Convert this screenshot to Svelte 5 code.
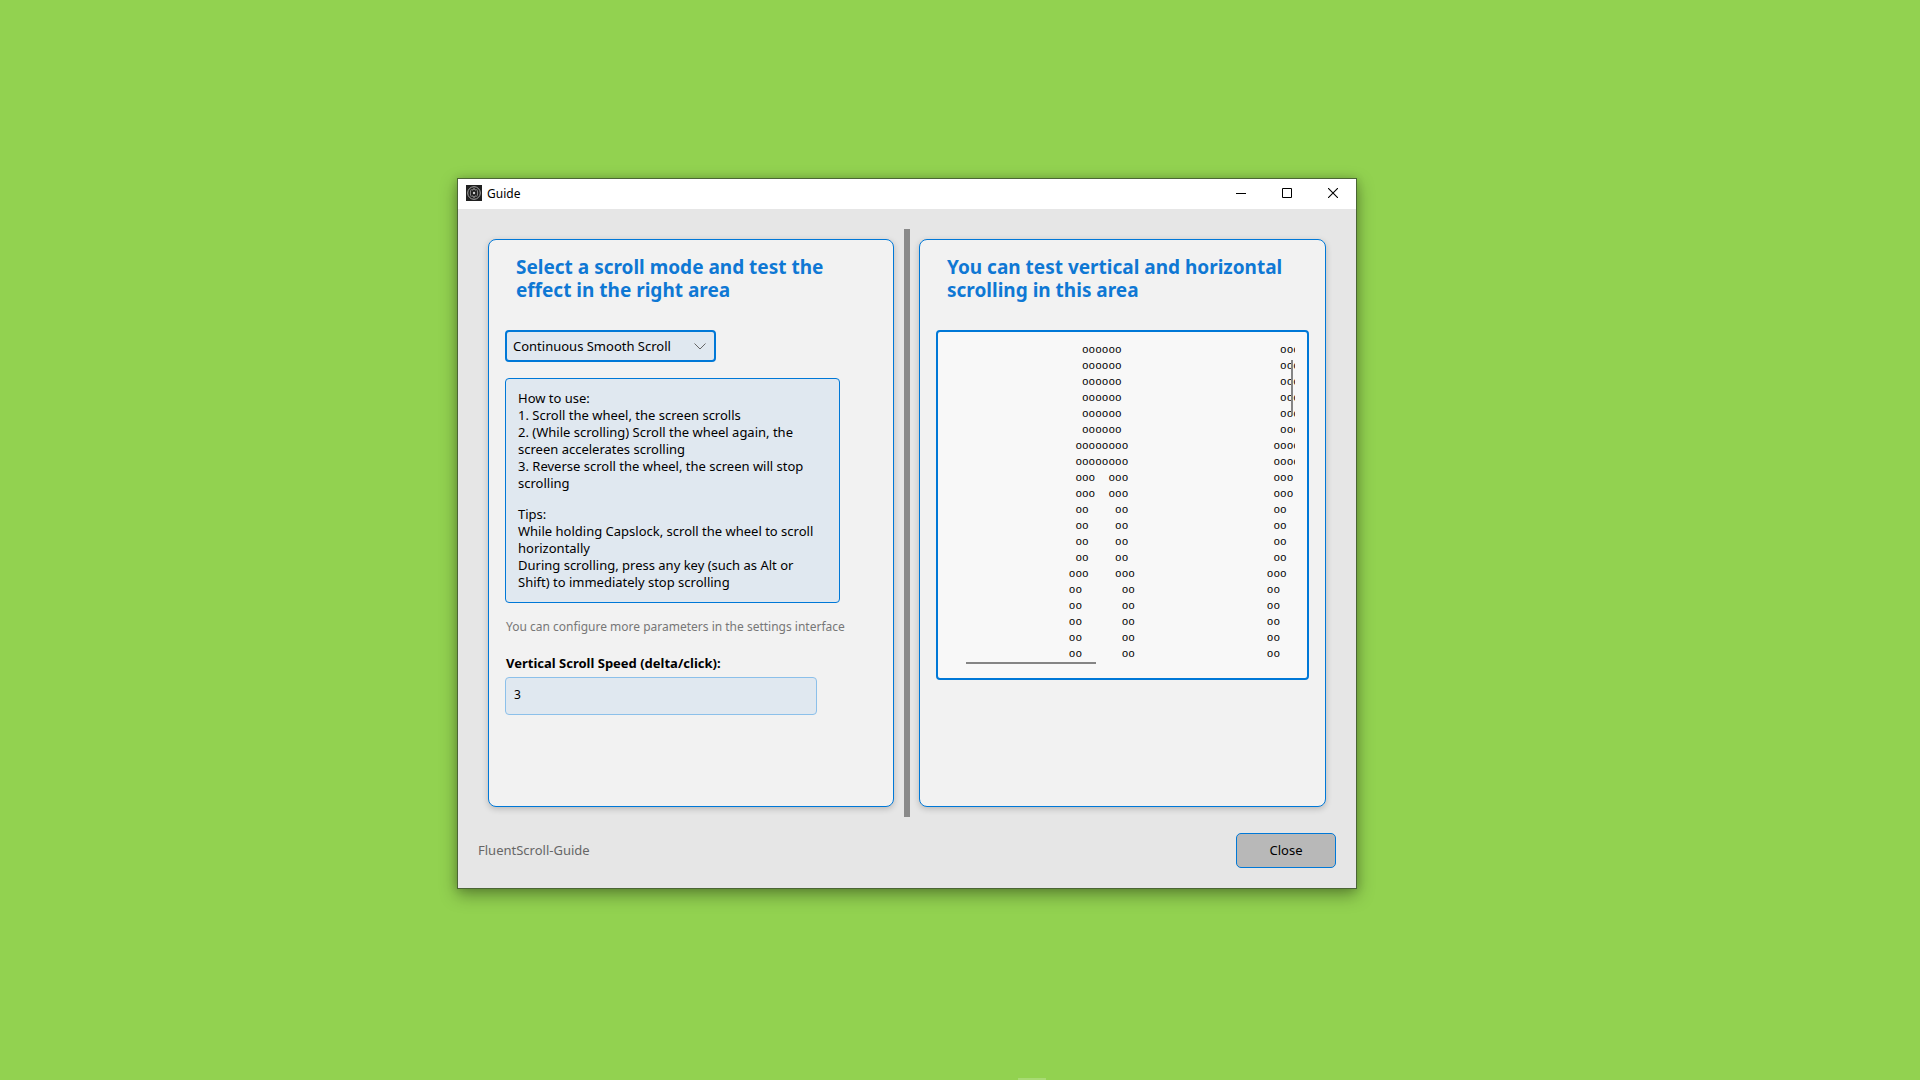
<script>
  const modes = ['Continuous Smooth Scroll', 'Single Smooth Scroll', 'Windows Default'];

  let mode = $state(modes[0]);
  let speed = $state('3');

  // the test pattern repeats every 30 characters
  const pattern = [
    ...Array(6).fill([[20, 6]]),
    ...Array(2).fill([[19, 8]]),
    ...Array(2).fill([[19, 3], [24, 3]]),
    ...Array(4).fill([[19, 2], [25, 2]]),
    [[18, 3], [25, 3]],
    ...Array(5).fill([[18, 2], [26, 2]]),
  ];

  function drawLine(runs) {
    let line = '';
    for (let i = 0; i < 3; i++) {
      for (const [start, count] of runs) {
        line = line.padEnd(start + i * 30) + 'o'.repeat(count);
      }
    }
    return line;
  }

  const testText = pattern.map(drawLine).join('\n');
</script>

<div class="desktop">
  <main class="window">
    <header class="titlebar">
      <svg class="app-icon" width="16" height="16" viewBox="0 0 16 16" fill="none">
        <rect width="16" height="16" fill="#202020" />
        <circle cx="8" cy="8" r="6.3" stroke="#a8a8a8" />
        <path d="M5.4 4.2C4 6 4 10 5.4 11.8M10.6 4.2C12 6 12 10 10.6 11.8" stroke="#8c8c8c" />
        <path d="M6.2 5.2 8 3.6l1.8 1.6M6.2 10.8 8 12.4l1.8-1.6" stroke="#c4c4c4" />
        <circle cx="8" cy="8" r="1.2" fill="#d0d0d0" />
      </svg>
      <span class="title">Guide</span>
      <div class="controls">
        <button class="control" aria-label="Minimize">
          <svg width="10" height="10" viewBox="0 0 10 10"><path d="M0 5.5h10" stroke="#000" /></svg>
        </button>
        <button class="control" aria-label="Maximize">
          <svg width="10" height="10" viewBox="0 0 10 10"><path d="M.5.5h9v9h-9z" fill="none" stroke="#000" /></svg>
        </button>
        <button class="control" aria-label="Close window">
          <svg width="10" height="10" viewBox="0 0 10 10"><path d="m0 0 10 10M10 0 0 10" stroke="#000" stroke-width="1.1" /></svg>
        </button>
      </div>
    </header>

    <div class="content">
      <section class="panel">
        <h2>Select a scroll mode and test the effect in the right area</h2>
        <div class="combo">
          <select aria-label="Scroll mode" bind:value={mode}>
            {#each modes as item}
              <option value={item}>{item}</option>
            {/each}
          </select>
          <svg class="chevron" width="12" height="7" viewBox="0 0 12 7"><path d="M.5.5 6 6 11.5.5" fill="none" stroke="#666" /></svg>
        </div>
        <div class="howto">
          <p>
            How to use:<br />
            1. Scroll the wheel, the screen scrolls<br />
            2. (While scrolling) Scroll the wheel again, the screen accelerates scrolling<br />
            3. Reverse scroll the wheel, the screen will stop scrolling
          </p>
          <p>
            Tips:<br />
            While holding Capslock, scroll the wheel to scroll horizontally<br />
            During scrolling, press any key (such as Alt or Shift) to immediately stop scrolling
          </p>
        </div>
        <p class="hint">You can configure more parameters in the settings interface</p>
        <label for="speed">Vertical Scroll Speed (delta/click):</label>
        <input id="speed" type="text" bind:value={speed} />
      </section>

      <div class="divider"></div>

      <section class="panel">
        <h2>You can test vertical and horizontal scrolling in this area</h2>
        <div class="tester">
          <pre>{testText}</pre>
          <div class="thumb-y"></div>
          <div class="thumb-x"></div>
        </div>
      </section>
    </div>

    <footer>
      <span class="name">FluentScroll-Guide</span>
      <button class="close">Close</button>
    </footer>
  </main>
  <div class="taskbar-edge"></div>
</div>

<style>
:global(body) {
  background: #92d250;
}
.desktop {
  position: relative;
  box-sizing: border-box;
  min-height: 100vh;
  font-family: "Noto Sans", "Open Sans", sans-serif;
  font-size: 13px;
  color: #000;
  overflow: hidden;
}
.window {
  position: absolute;
  top: 178px;
  left: 457px;
  box-sizing: border-box;
  width: 100%;
  max-width: 900px;
  border: 1px solid #4b6535;
  background: #e6e6e6;
  box-shadow: 0 6px 16px rgba(0, 0, 0, 0.35), 0 0 8px rgba(0, 0, 0, 0.15);
}
.titlebar {
  display: flex;
  align-items: center;
  box-sizing: border-box;
  height: 30px;
  padding: 0 0 2px 8px;
  background: #fff;
}
.title {
  margin-left: 5px;
  font-size: 12px;
}
.controls {
  display: flex;
  margin-left: auto;
}
.control {
  display: flex;
  align-items: center;
  justify-content: center;
  width: 46px;
  height: 28px;
  padding: 0;
  border: 0;
  background: transparent;
}
.content {
  display: grid;
  grid-template-columns: minmax(0, 406fr) 5px minmax(0, 407fr);
  gap: 10px;
  padding: 20px 30px 0;
}
.divider {
  width: 6px;
  background: #8a8a8a;
}
.panel {
  box-sizing: border-box;
  min-height: 568px;
  margin: 10px 0;
  padding: 16px;
  border: 1px solid #0078d7;
  border-radius: 8px;
  background: #f2f2f2;
  box-shadow: 0 2px 6px rgba(0, 0, 0, 0.2);
}
h2 {
  margin: 0 10px 28px 11px;
  font-size: 19px;
  font-weight: 700;
  line-height: 23px;
  color: #0f78d4;
}
.combo {
  position: relative;
  width: 211px;
}
select {
  appearance: none;
  box-sizing: border-box;
  width: 100%;
  height: 32px;
  padding: 0 6px;
  border: 2px solid #0078d7;
  border-radius: 4px;
  background: #e0e8f0;
  font: inherit;
  color: #000;
}
.chevron {
  position: absolute;
  top: 13px;
  right: 10px;
  pointer-events: none;
}
.howto {
  box-sizing: border-box;
  width: 335px;
  min-height: 225px;
  margin-top: 16px;
  padding: 11px 14px 11px 12px;
  border: 1px solid #0078d7;
  border-radius: 4px;
  background: #e0e8f0;
  line-height: 17px;
}
.howto p {
  margin: 0 0 14px;
}
.howto p:last-child {
  margin: 0;
}
.hint {
  margin: 15px 0 0 1px;
  font-size: 12px;
  line-height: 17px;
  color: #777;
}
label {
  display: block;
  margin: 19px 0 4px 1px;
  font-weight: 700;
  line-height: 19px;
}
input {
  display: block;
  box-sizing: border-box;
  width: 312px;
  height: 38px;
  padding: 0 8px 4px;
  border: 1px solid #8cc0ea;
  border-radius: 4px;
  background: #e0e8f0;
  font: inherit;
  font-size: 12px;
  color: #000;
}
.tester {
  position: relative;
  box-sizing: border-box;
  height: 350px;
  padding: 10px 12px;
  border: 2px solid #0078d7;
  border-radius: 4px;
  background: #f8f8f8;
}
pre {
  height: 100%;
  margin: 0;
  overflow: auto;
  scrollbar-width: none;
  font-family: "Liberation Mono", monospace;
  font-size: 11px;
  line-height: 16px;
}
.thumb-y {
  position: absolute;
  top: 28px;
  right: 14px;
  width: 2px;
  height: 55px;
  background: #858585;
}
.thumb-x {
  position: absolute;
  bottom: 14px;
  left: 28px;
  width: 130px;
  height: 2px;
  background: #858585;
}
footer {
  display: flex;
  align-items: center;
  justify-content: space-between;
  padding: 16px 20px 20px;
}
.name {
  padding-bottom: 2px;
  color: #666;
}
.close {
  width: 100px;
  height: 35px;
  padding: 0 0 2px;
  border: 1px solid #0078d7;
  border-radius: 5px;
  background: #b8b8b8;
  font: inherit;
}
.taskbar-edge {
  position: absolute;
  bottom: 0;
  left: 53%;
  width: 28px;
  height: 2px;
  background: #a8db74;
}
</style>
